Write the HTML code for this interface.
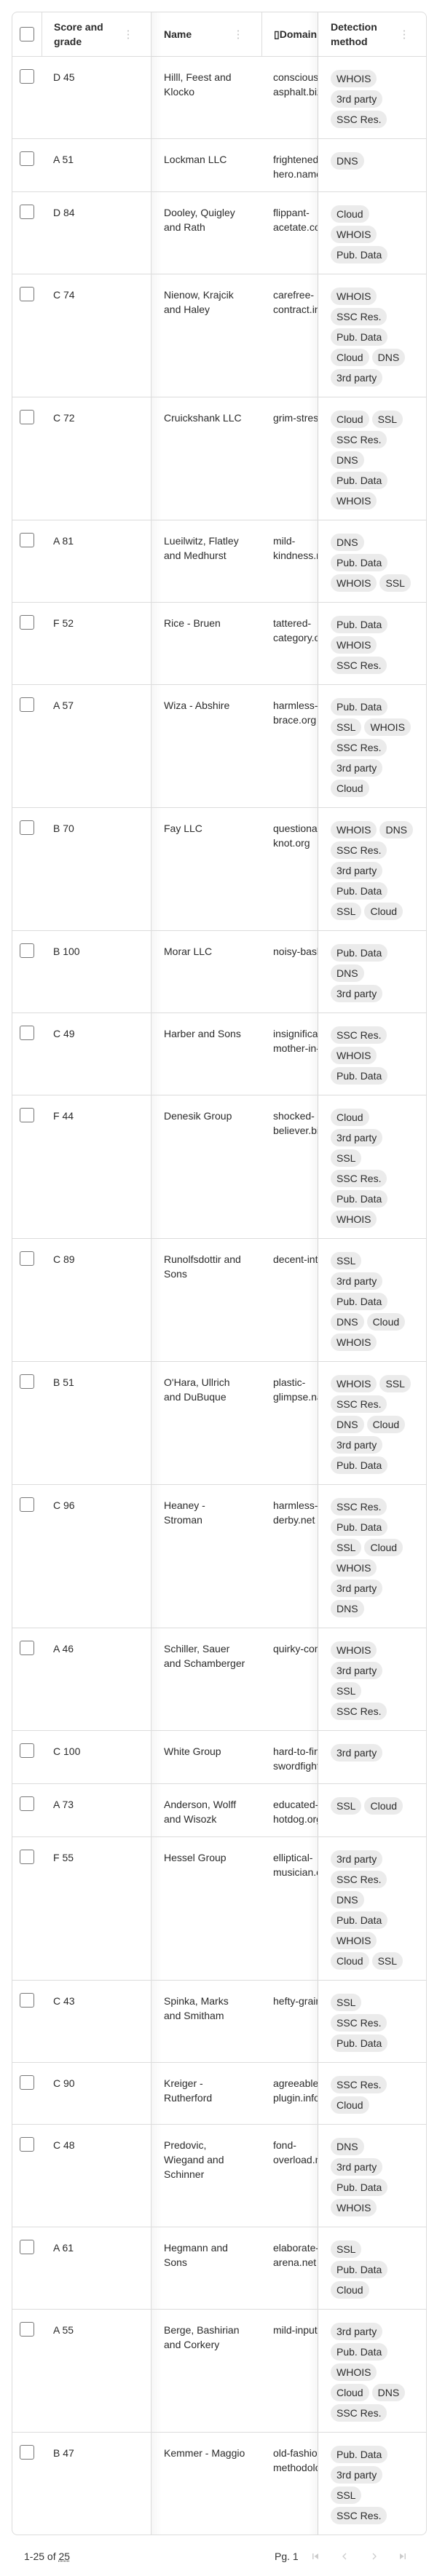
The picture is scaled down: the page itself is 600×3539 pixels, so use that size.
<!DOCTYPE html>
<html><head><meta charset="utf-8"><style>
*{box-sizing:border-box;margin:0;padding:0}
body{width:600px;height:3539px;background:#fff;font-family:"Liberation Sans",Arial,sans-serif;font-size:14px;color:#2b2b2b;position:relative;overflow:hidden}
.tbl{position:absolute;left:16px;top:16px;width:570px;border:1px solid #dcdcdc;border-radius:8px;overflow:hidden}
.row{display:flex;border-bottom:1px solid #dcdcdc;position:relative}
.row:last-child{border-bottom:none}
.c{position:relative;line-height:20px}
.c1{width:40px;padding:17px 0 0 10px}
.c2{width:150px;padding:18px 0 14px 16px}
.c3{width:152px;padding:18px 0 14px 17px;border-left:1px solid #dcdcdc}
.c3::before{content:"";position:absolute;left:0;top:0;bottom:0;width:14px;background:linear-gradient(90deg,rgba(0,0,0,.035),rgba(0,0,0,0))}
.c4{width:77px;padding:18px 0 14px 16px;overflow:hidden;white-space:nowrap}
.c5{width:149px;padding:18px 0 14px 17px;border-left:1px solid #dcdcdc;position:relative}
.c5::before{content:"";position:absolute;left:-14px;top:0;bottom:0;width:14px;background:linear-gradient(90deg,rgba(0,0,0,0),rgba(0,0,0,.035))}
.cb{width:20px;height:20px;border:1.5px solid #777;border-radius:3px;background:#fff}
.l{display:flex;gap:4px;margin-bottom:4px}
.l:last-child{margin-bottom:0}
.t{height:24px;line-height:24px;padding:0 8px;background:#ebebeb;border-radius:12px;white-space:nowrap;font-size:14px}
.hd{height:61px;align-items:center}
.hd .c{font-weight:bold;padding-top:0;padding-bottom:0;height:61px;display:flex;align-items:center}
.hd .c1{padding-left:10px}
.hd .c2{border-left:1px solid #dcdcdc;padding-left:16px}
.hd .c4{border-left:1px solid #dcdcdc}
.k{position:absolute;top:23px;width:2px;height:14px;background:radial-gradient(circle,#c8c8c8 1px,transparent 1.2px) 0 0/2px 5px repeat-y}
.ft{position:absolute;top:3502px;left:33px;font-size:14px;color:#333;line-height:20px}
.ft u{text-decoration:underline dotted}
.pg{position:absolute;top:3502px;left:377px;font-size:14px;color:#333;line-height:20px}
.ic{position:absolute;top:3505px}
</style></head><body>
<div class="tbl">
<div class="row hd">
<div class="c c1"><div class="cb"></div></div>
<div class="c c2" style="width:150px">Score and<br>grade<span class="k" style="left:117px"></span></div>
<div class="c c3">Name<span class="k" style="left:118px"></span></div>
<div class="c c4" style="padding-left:16px">▯Domain</div>
<div class="c c5">Detection<br>method<span class="k" style="left:117px"></span></div>
</div>

<div class="row"><div class="c c1"><div class="cb"></div></div><div class="c c2">D 45</div><div class="c c3">Hilll, Feest and<br>Klocko</div><div class="c c4">conscious-<br>asphalt.biz</div><div class="c c5"><div class="l"><span class="t">WHOIS</span></div><div class="l"><span class="t">3rd party</span></div><div class="l"><span class="t">SSC Res.</span></div></div></div>
<div class="row"><div class="c c1"><div class="cb"></div></div><div class="c c2">A 51</div><div class="c c3">Lockman LLC</div><div class="c c4">frightened-<br>hero.name</div><div class="c c5"><div class="l"><span class="t">DNS</span></div></div></div>
<div class="row"><div class="c c1"><div class="cb"></div></div><div class="c c2">D 84</div><div class="c c3">Dooley, Quigley<br>and Rath</div><div class="c c4">flippant-<br>acetate.com</div><div class="c c5"><div class="l"><span class="t">Cloud</span></div><div class="l"><span class="t">WHOIS</span></div><div class="l"><span class="t">Pub. Data</span></div></div></div>
<div class="row"><div class="c c1"><div class="cb"></div></div><div class="c c2">C 74</div><div class="c c3">Nienow, Krajcik<br>and Haley</div><div class="c c4">carefree-<br>contract.info</div><div class="c c5"><div class="l"><span class="t">WHOIS</span></div><div class="l"><span class="t">SSC Res.</span></div><div class="l"><span class="t">Pub. Data</span></div><div class="l"><span class="t">Cloud</span><span class="t">DNS</span></div><div class="l"><span class="t">3rd party</span></div></div></div>
<div class="row"><div class="c c1"><div class="cb"></div></div><div class="c c2">C 72</div><div class="c c3">Cruickshank LLC</div><div class="c c4">grim-stress.com</div><div class="c c5"><div class="l"><span class="t">Cloud</span><span class="t">SSL</span></div><div class="l"><span class="t">SSC Res.</span></div><div class="l"><span class="t">DNS</span></div><div class="l"><span class="t">Pub. Data</span></div><div class="l"><span class="t">WHOIS</span></div></div></div>
<div class="row"><div class="c c1"><div class="cb"></div></div><div class="c c2">A 81</div><div class="c c3">Lueilwitz, Flatley<br>and Medhurst</div><div class="c c4">mild-<br>kindness.net</div><div class="c c5"><div class="l"><span class="t">DNS</span></div><div class="l"><span class="t">Pub. Data</span></div><div class="l"><span class="t">WHOIS</span><span class="t">SSL</span></div></div></div>
<div class="row"><div class="c c1"><div class="cb"></div></div><div class="c c2">F 52</div><div class="c c3">Rice - Bruen</div><div class="c c4">tattered-<br>category.org</div><div class="c c5"><div class="l"><span class="t">Pub. Data</span></div><div class="l"><span class="t">WHOIS</span></div><div class="l"><span class="t">SSC Res.</span></div></div></div>
<div class="row"><div class="c c1"><div class="cb"></div></div><div class="c c2">A 57</div><div class="c c3">Wiza - Abshire</div><div class="c c4">harmless-<br>brace.org</div><div class="c c5"><div class="l"><span class="t">Pub. Data</span></div><div class="l"><span class="t">SSL</span><span class="t">WHOIS</span></div><div class="l"><span class="t">SSC Res.</span></div><div class="l"><span class="t">3rd party</span></div><div class="l"><span class="t">Cloud</span></div></div></div>
<div class="row"><div class="c c1"><div class="cb"></div></div><div class="c c2">B 70</div><div class="c c3">Fay LLC</div><div class="c c4">questionable-<br>knot.org</div><div class="c c5"><div class="l"><span class="t">WHOIS</span><span class="t">DNS</span></div><div class="l"><span class="t">SSC Res.</span></div><div class="l"><span class="t">3rd party</span></div><div class="l"><span class="t">Pub. Data</span></div><div class="l"><span class="t">SSL</span><span class="t">Cloud</span></div></div></div>
<div class="row"><div class="c c1"><div class="cb"></div></div><div class="c c2">B 100</div><div class="c c3">Morar LLC</div><div class="c c4">noisy-basket.com</div><div class="c c5"><div class="l"><span class="t">Pub. Data</span></div><div class="l"><span class="t">DNS</span></div><div class="l"><span class="t">3rd party</span></div></div></div>
<div class="row"><div class="c c1"><div class="cb"></div></div><div class="c c2">C 49</div><div class="c c3">Harber and Sons</div><div class="c c4">insignificant-<br>mother-in-law.biz</div><div class="c c5"><div class="l"><span class="t">SSC Res.</span></div><div class="l"><span class="t">WHOIS</span></div><div class="l"><span class="t">Pub. Data</span></div></div></div>
<div class="row"><div class="c c1"><div class="cb"></div></div><div class="c c2">F 44</div><div class="c c3">Denesik Group</div><div class="c c4">shocked-<br>believer.biz</div><div class="c c5"><div class="l"><span class="t">Cloud</span></div><div class="l"><span class="t">3rd party</span></div><div class="l"><span class="t">SSL</span></div><div class="l"><span class="t">SSC Res.</span></div><div class="l"><span class="t">Pub. Data</span></div><div class="l"><span class="t">WHOIS</span></div></div></div>
<div class="row"><div class="c c1"><div class="cb"></div></div><div class="c c2">C 89</div><div class="c c3">Runolfsdottir and<br>Sons</div><div class="c c4">decent-interval.com</div><div class="c c5"><div class="l"><span class="t">SSL</span></div><div class="l"><span class="t">3rd party</span></div><div class="l"><span class="t">Pub. Data</span></div><div class="l"><span class="t">DNS</span><span class="t">Cloud</span></div><div class="l"><span class="t">WHOIS</span></div></div></div>
<div class="row"><div class="c c1"><div class="cb"></div></div><div class="c c2">B 51</div><div class="c c3">O'Hara, Ullrich<br>and DuBuque</div><div class="c c4">plastic-<br>glimpse.name</div><div class="c c5"><div class="l"><span class="t">WHOIS</span><span class="t">SSL</span></div><div class="l"><span class="t">SSC Res.</span></div><div class="l"><span class="t">DNS</span><span class="t">Cloud</span></div><div class="l"><span class="t">3rd party</span></div><div class="l"><span class="t">Pub. Data</span></div></div></div>
<div class="row"><div class="c c1"><div class="cb"></div></div><div class="c c2">C 96</div><div class="c c3">Heaney -<br>Stroman</div><div class="c c4">harmless-<br>derby.net</div><div class="c c5"><div class="l"><span class="t">SSC Res.</span></div><div class="l"><span class="t">Pub. Data</span></div><div class="l"><span class="t">SSL</span><span class="t">Cloud</span></div><div class="l"><span class="t">WHOIS</span></div><div class="l"><span class="t">3rd party</span></div><div class="l"><span class="t">DNS</span></div></div></div>
<div class="row"><div class="c c1"><div class="cb"></div></div><div class="c c2">A 46</div><div class="c c3">Schiller, Sauer<br>and Schamberger</div><div class="c c4">quirky-comment.org</div><div class="c c5"><div class="l"><span class="t">WHOIS</span></div><div class="l"><span class="t">3rd party</span></div><div class="l"><span class="t">SSL</span></div><div class="l"><span class="t">SSC Res.</span></div></div></div>
<div class="row"><div class="c c1"><div class="cb"></div></div><div class="c c2">C 100</div><div class="c c3">White Group</div><div class="c c4">hard-to-find-<br>swordfight.info</div><div class="c c5"><div class="l"><span class="t">3rd party</span></div></div></div>
<div class="row"><div class="c c1"><div class="cb"></div></div><div class="c c2">A 73</div><div class="c c3">Anderson, Wolff<br>and Wisozk</div><div class="c c4">educated-<br>hotdog.org</div><div class="c c5"><div class="l"><span class="t">SSL</span><span class="t">Cloud</span></div></div></div>
<div class="row"><div class="c c1"><div class="cb"></div></div><div class="c c2">F 55</div><div class="c c3">Hessel Group</div><div class="c c4">elliptical-<br>musician.com</div><div class="c c5"><div class="l"><span class="t">3rd party</span></div><div class="l"><span class="t">SSC Res.</span></div><div class="l"><span class="t">DNS</span></div><div class="l"><span class="t">Pub. Data</span></div><div class="l"><span class="t">WHOIS</span></div><div class="l"><span class="t">Cloud</span><span class="t">SSL</span></div></div></div>
<div class="row"><div class="c c1"><div class="cb"></div></div><div class="c c2">C 43</div><div class="c c3">Spinka, Marks<br>and Smitham</div><div class="c c4">hefty-grain.com</div><div class="c c5"><div class="l"><span class="t">SSL</span></div><div class="l"><span class="t">SSC Res.</span></div><div class="l"><span class="t">Pub. Data</span></div></div></div>
<div class="row"><div class="c c1"><div class="cb"></div></div><div class="c c2">C 90</div><div class="c c3">Kreiger -<br>Rutherford</div><div class="c c4">agreeable-<br>plugin.info</div><div class="c c5"><div class="l"><span class="t">SSC Res.</span></div><div class="l"><span class="t">Cloud</span></div></div></div>
<div class="row"><div class="c c1"><div class="cb"></div></div><div class="c c2">C 48</div><div class="c c3">Predovic,<br>Wiegand and<br>Schinner</div><div class="c c4">fond-<br>overload.net</div><div class="c c5"><div class="l"><span class="t">DNS</span></div><div class="l"><span class="t">3rd party</span></div><div class="l"><span class="t">Pub. Data</span></div><div class="l"><span class="t">WHOIS</span></div></div></div>
<div class="row"><div class="c c1"><div class="cb"></div></div><div class="c c2">A 61</div><div class="c c3">Hegmann and<br>Sons</div><div class="c c4">elaborate-<br>arena.net</div><div class="c c5"><div class="l"><span class="t">SSL</span></div><div class="l"><span class="t">Pub. Data</span></div><div class="l"><span class="t">Cloud</span></div></div></div>
<div class="row"><div class="c c1"><div class="cb"></div></div><div class="c c2">A 55</div><div class="c c3">Berge, Bashirian<br>and Corkery</div><div class="c c4">mild-input.com</div><div class="c c5"><div class="l"><span class="t">3rd party</span></div><div class="l"><span class="t">Pub. Data</span></div><div class="l"><span class="t">WHOIS</span></div><div class="l"><span class="t">Cloud</span><span class="t">DNS</span></div><div class="l"><span class="t">SSC Res.</span></div></div></div>
<div class="row"><div class="c c1"><div class="cb"></div></div><div class="c c2">B 47</div><div class="c c3">Kemmer - Maggio</div><div class="c c4">old-fashioned-<br>methodology.com</div><div class="c c5"><div class="l"><span class="t">Pub. Data</span></div><div class="l"><span class="t">3rd party</span></div><div class="l"><span class="t">SSL</span></div><div class="l"><span class="t">SSC Res.</span></div></div></div>
</div>

<div class="ft">1-25 of <u>25</u></div>
<div class="pg">Pg. 1</div>
<svg class="ic" style="left:427px" width="12" height="14" viewBox="0 0 12 14"><rect x="2" y="3" width="1.5" height="8" fill="#ccc"/><path d="M10 3 L4.5 7 L10 11Z" fill="#ccc"/></svg>
<svg class="ic" style="left:467px" width="12" height="14" viewBox="0 0 12 14"><path d="M8 3 L4 7 L8 11" stroke="#ccc" stroke-width="1.3" fill="none"/></svg>
<svg class="ic" style="left:508px" width="12" height="14" viewBox="0 0 12 14"><path d="M4 3 L8 7 L4 11" stroke="#ccc" stroke-width="1.3" fill="none"/></svg>
<svg class="ic" style="left:547px" width="12" height="14" viewBox="0 0 12 14"><path d="M2 3 L7.5 7 L2 11Z" fill="#ccc"/><rect x="8.5" y="3" width="1.5" height="8" fill="#ccc"/></svg>
</body></html>
